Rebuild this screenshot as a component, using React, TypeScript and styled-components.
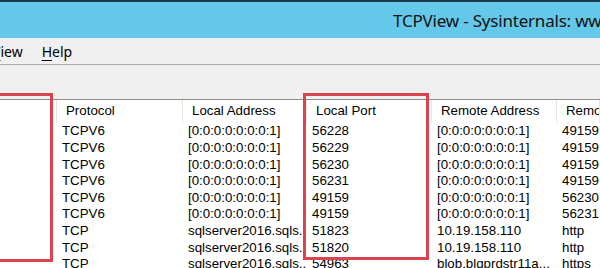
import React from "react";
import styled, { createGlobalStyle } from "styled-components";

const Global = createGlobalStyle`
  html, body { margin: 0; padding: 0; background: #fff; overflow: hidden; }
`;

const Window = styled.div`
  position: relative;
  width: 600px;
  height: 268px;
  overflow: hidden;
  display: flex;
  flex-direction: column;
  background: #f0f0f0;
`;

const TitleBar = styled.div`
  flex: none;
  height: 36px;
  border-top: 2px solid #20364a;
  background: #63c8e9;
  display: flex;
  align-items: center;
  padding-left: 393px;
  font-family: "Noto Sans", "Open Sans", sans-serif;
  font-size: 17px;
  letter-spacing: -0.2px;
  color: #111;
  white-space: nowrap;
`;

const MenuBar = styled.div`
  flex: none;
  height: 26px;
  margin-left: -8px;
  display: flex;
  align-items: center;
  gap: 19px;
  border-bottom: 1px solid #acacac;
  font-family: "Noto Sans", "Open Sans", sans-serif;
  font-size: 14px;
  color: #000;
`;

const MenuItem = styled.span`
  white-space: nowrap;
`;

const Accel = styled.span`
  text-decoration: underline;
  text-underline-offset: 3px;
  text-decoration-thickness: 1px;
`;

const Toolbar = styled.div`
  flex: none;
  height: 34px;
`;

const List = styled.div`
  flex: 1;
  background: #fff;
  border-top: 1px solid #8e8e8e;
  font-family: "Liberation Sans", Arial, sans-serif;
  font-size: 13.3px;
  color: #000;
`;

const Columns = "57px 126px 124px 125px 125px 1fr";

const HeaderRow = styled.div`
  display: grid;
  grid-template-columns: ${Columns};
  height: 23.4px;
`;

const HeaderCell = styled.div`
  display: flex;
  align-items: center;
  padding: 0 0 2px 9px;
  border-right: 1px solid #e5e5e5;
  white-space: nowrap;
  overflow: hidden;
`;

const Row = styled.div`
  display: grid;
  grid-template-columns: ${Columns};
  height: 16.6px;
  line-height: 16.6px;
`;

const Cell = styled.div`
  padding-left: 5px;
  white-space: nowrap;
  overflow: hidden;
`;

const Highlight = styled.div<{ $left: number; $top: number; $w: number; $h: number }>`
  position: absolute;
  left: ${(p) => p.$left}px;
  top: ${(p) => p.$top}px;
  width: ${(p) => p.$w}px;
  height: ${(p) => p.$h}px;
  box-sizing: border-box;
  border: 3px solid #d9444e;
  pointer-events: none;
`;

const headers = ["", "Protocol", "Local Address", "Local Port", "Remote Address", "Remote Port"];

const loop = "[0:0:0:0:0:0:0:1]";
const sql = "sqlserver2016.sqls...";

const rows: string[][] = [
  ["", "TCPV6", loop, "56228", loop, "49159"],
  ["", "TCPV6", loop, "56229", loop, "49159"],
  ["", "TCPV6", loop, "56230", loop, "49159"],
  ["", "TCPV6", loop, "56231", loop, "49159"],
  ["", "TCPV6", loop, "49159", loop, "56230"],
  ["", "TCPV6", loop, "49159", loop, "56231"],
  ["", "TCP", sql, "51823", "10.19.158.110", "http"],
  ["", "TCP", sql, "51820", "10.19.158.110", "http"],
  ["", "TCP", sql, "54963", "blob.blqprdstr11a...", "https"],
];

export default function App() {
  return (
    <>
      <Global />
      <Window>
        <TitleBar>TCPView - Sysinternals: www.sysinternals.com</TitleBar>
        <MenuBar>
          <MenuItem>
            <Accel>V</Accel>iew
          </MenuItem>
          <MenuItem>
            <Accel>H</Accel>elp
          </MenuItem>
        </MenuBar>
        <Toolbar />
        <List>
          <HeaderRow>
            {headers.map((h, i) => (
              <HeaderCell key={i}>{h}</HeaderCell>
            ))}
          </HeaderRow>
          {rows.map((r, i) => (
            <Row key={i}>
              {r.map((c, j) => (
                <Cell key={j}>{c}</Cell>
              ))}
            </Row>
          ))}
        </List>
        <Highlight $left={-10} $top={93} $w={63} $h={169} />
        <Highlight $left={303} $top={93} $w={126} $h={167} />
      </Window>
    </>
  );
}
